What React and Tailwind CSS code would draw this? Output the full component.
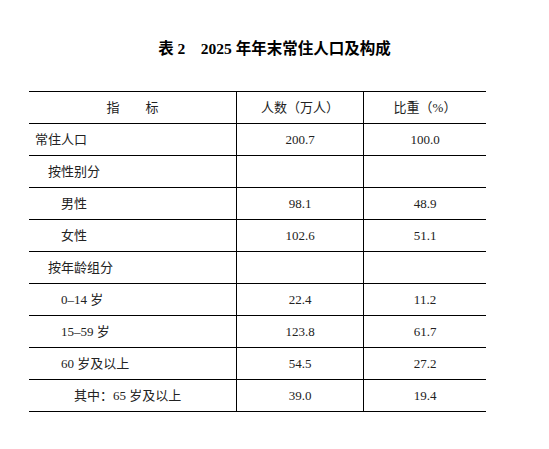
const rows = [
  { label: '常住人口', indent: 0, num: '200.7', pct: '100.0' },
  { label: '按性别分', indent: 1, num: '', pct: '' },
  { label: '男性', indent: 2, num: '98.1', pct: '48.9' },
  { label: '女性', indent: 2, num: '102.6', pct: '51.1' },
  { label: '按年龄组分', indent: 1, num: '', pct: '' },
  { label: '0–14 岁', indent: 2, num: '22.4', pct: '11.2' },
  { label: '15–59 岁', indent: 2, num: '123.8', pct: '61.7' },
  { label: '60 岁及以上', indent: 2, num: '54.5', pct: '27.2' },
  { label: '其中：65 岁及以上', indent: 3, num: '39.0', pct: '19.4' },
];

const indentClass = ['pl-[6px]', 'pl-[19px]', 'pl-[32px]', 'pl-[45px]'];

const App = () => {
  return (
    <div
      className="w-[549px] h-[449px] bg-white text-[#222]"
      style={{ fontFamily: '"Liberation Serif", "Noto Sans CJK SC", serif' }}
    >
      {/* 标题 */}
      <div className="pt-[38px] text-center text-[15.5px] leading-[21px] font-bold text-black">
        表 2　2025 年年末常住人口及构成
      </div>

      {/* 表格 */}
      <div className="mt-[32px] ml-[29px] w-[457px] border-t border-black text-[13px]">
        <div className="flex h-[32px] border-b border-black">
          <div className="w-[208px] border-r border-black flex items-center justify-center">指　　标</div>
          <div className="w-[127px] border-r border-black flex items-center justify-center">人数（万人）</div>
          <div className="flex-1 flex items-center justify-center">比重（%）</div>
        </div>
        {rows.map(r => (
          <div key={r.label} className="flex h-[32px] border-b border-black">
            <div className={`w-[208px] border-r border-black flex items-center ${indentClass[r.indent]}`}>
              {r.label}
            </div>
            <div className="w-[127px] border-r border-black flex items-center justify-center">{r.num}</div>
            <div className="flex-1 flex items-center justify-center">{r.pct}</div>
          </div>
        ))}
      </div>
    </div>
  );
};

export default App;
